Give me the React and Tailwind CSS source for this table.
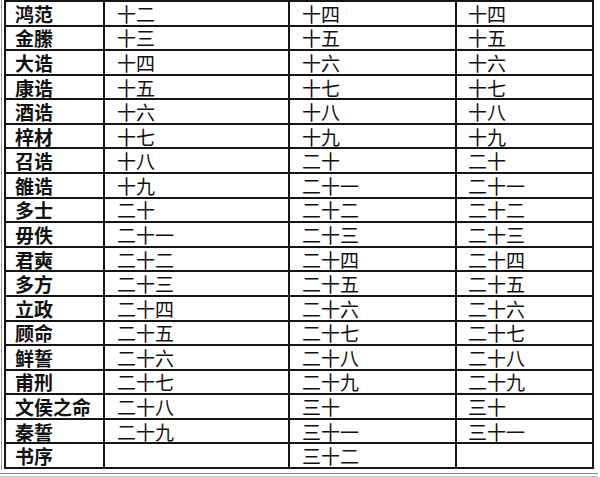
import React from 'react';

const rows = [
  ['鸿范', '十二', '十四', '十四'],
  ['金縢', '十三', '十五', '十五'],
  ['大诰', '十四', '十六', '十六'],
  ['康诰', '十五', '十七', '十七'],
  ['酒诰', '十六', '十八', '十八'],
  ['梓材', '十七', '十九', '十九'],
  ['召诰', '十八', '二十', '二十'],
  ['雒诰', '十九', '二十一', '二十一'],
  ['多士', '二十', '二十二', '二十二'],
  ['毋佚', '二十一', '二十三', '二十三'],
  ['君奭', '二十二', '二十四', '二十四'],
  ['多方', '二十三', '二十五', '二十五'],
  ['立政', '二十四', '二十六', '二十六'],
  ['顾命', '二十五', '二十七', '二十七'],
  ['鲜誓', '二十六', '二十八', '二十八'],
  ['甫刑', '二十七', '二十九', '二十九'],
  ['文侯之命', '二十八', '三十', '三十'],
  ['秦誓', '二十九', '三十一', '三十一'],
  ['书序', '', '三十二', ''],
];

export default function App() {
  return (
    <div className="w-[600px] h-[477px] bg-white overflow-hidden text-[#111] font-['Noto_Sans_CJK_SC',sans-serif]">
      <div className="flex">
        <div className="w-px ml-px h-[470px] bg-[#9a9a9a]" />
        <div className="ml-[2px] w-[590px] h-[469px] grid grid-cols-[97px_183px_165px_135px] grid-rows-[repeat(19,minmax(0,1fr))] gap-[2px] p-[2px] bg-[#151515]">
          {rows.map((r, i) => (
            <React.Fragment key={i}>
              <div className="bg-white flex items-center pl-[9px] text-[19px] leading-none font-bold">{r[0]}</div>
              <div className="bg-white flex items-center pl-[12px] text-[19px] leading-none">{r[1]}</div>
              <div className="bg-white flex items-center pl-[12px] text-[19px] leading-none">{r[2]}</div>
              <div className="bg-white flex items-center pl-[11px] text-[19px] leading-none">{r[3]}</div>
            </React.Fragment>
          ))}
        </div>
      </div>
      <div className="mt-[3px] h-px w-[598px] bg-[#8a8a8a]" />
      <div className="mt-[2px] h-px w-[598px] bg-[#c4c4c4]" />
    </div>
  );
}
